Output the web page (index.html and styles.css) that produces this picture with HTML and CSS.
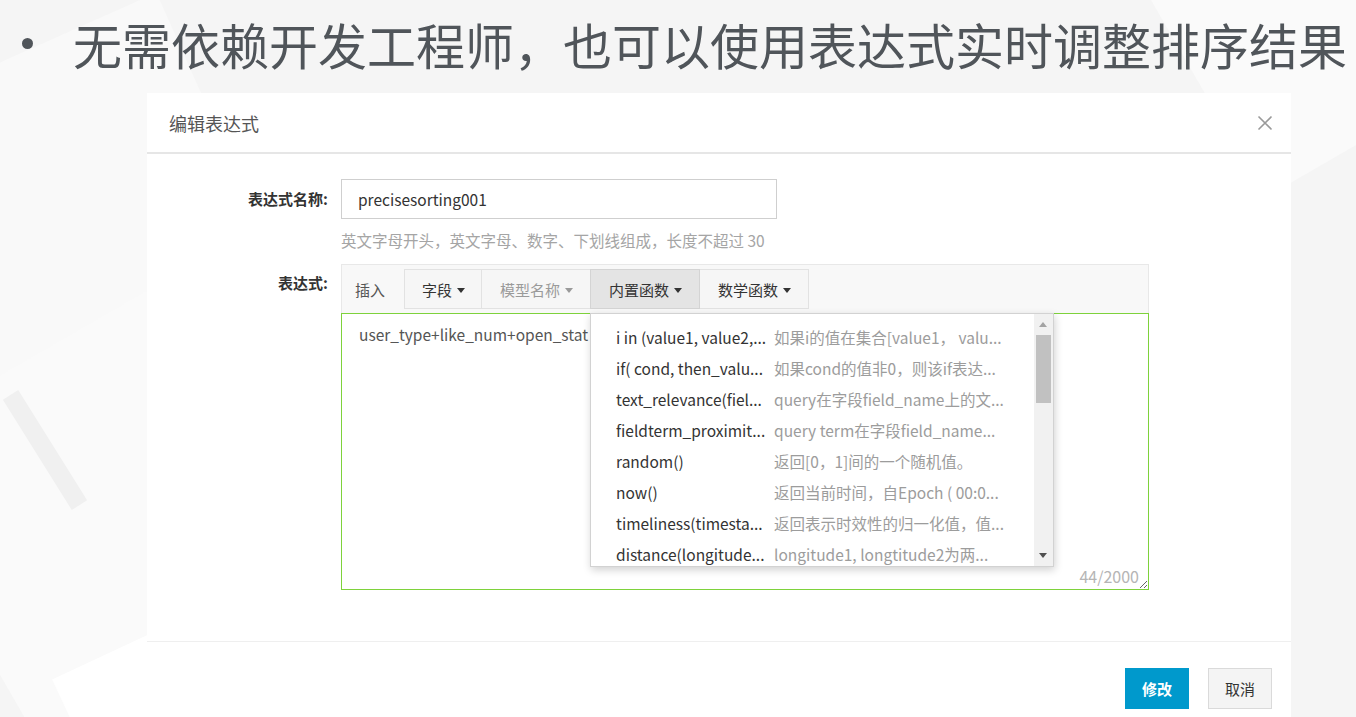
FILE: index.html
```html
<!DOCTYPE html>
<html lang="zh-CN">
<head>
    <meta charset="UTF-8">
    <meta name="viewport" content="width=device-width, initial-scale=1.0">
    <title>编辑表达式</title>
    <link rel="stylesheet" href="styles.css">
</head>
<body>
    <div class="bg-shapes">
        <span class="shape s1"></span>
        <span class="shape s2"></span>
        <span class="shape s3"></span>
        <span class="shape s4"></span>
        <span class="shape s5"></span>
    </div>

    <div class="slide">
        <h1 class="headline"><span class="dot"></span>无需依赖开发工程师，也可以使用表达式实时调整排序结果</h1>

        <div class="dialog">
            <div class="dialog-header">
                <span class="dialog-title">编辑表达式</span>
                <svg class="close" width="16" height="16" viewBox="0 0 16 16">
                    <path d="M1.5 1.5 L14.5 14.5 M14.5 1.5 L1.5 14.5" stroke="#9a9a9a" stroke-width="1.6" fill="none"/>
                </svg>
            </div>

            <div class="dialog-body">
                <div class="form-row">
                    <label class="form-label label-input">表达式名称:</label>
                    <div class="form-field">
                        <div class="text-input">precisesorting001</div>
                        <div class="hint">英文字母开头，英文字母、数字、下划线组成，长度不超过 30</div>
                    </div>
                </div>

                <div class="form-row">
                    <label class="form-label label-editor">表达式:</label>
                    <div class="form-field">
                        <div class="toolbar">
                            <span class="toolbar-label">插入</span>
                            <div class="btn-group">
                                <span class="tool-btn">字段<i class="caret"></i></span>
                                <span class="tool-btn disabled">模型名称<i class="caret"></i></span>
                                <span class="tool-btn active">内置函数<i class="caret"></i>
                                    <div class="fn-menu">
                                        <ul class="fn-list">
                                            <li><span class="fn-name">i in (value1, value2,...</span><span class="fn-desc">如果i的值在集合[value1，  valu...</span></li>
                                            <li><span class="fn-name">if( cond, then_valu...</span><span class="fn-desc">如果cond的值非0，则该if表达...</span></li>
                                            <li><span class="fn-name">text_relevance(fiel...</span><span class="fn-desc">query在字段field_name上的文...</span></li>
                                            <li><span class="fn-name">fieldterm_proximit...</span><span class="fn-desc">query term在字段field_name...</span></li>
                                            <li><span class="fn-name">random()</span><span class="fn-desc">返回[0，1]间的一个随机值。</span></li>
                                            <li><span class="fn-name">now()</span><span class="fn-desc">返回当前时间，自Epoch ( 00:0...</span></li>
                                            <li><span class="fn-name">timeliness(timesta...</span><span class="fn-desc">返回表示时效性的归一化值，值...</span></li>
                                            <li><span class="fn-name">distance(longitude...</span><span class="fn-desc">longitude1, longtitude2为两...</span></li>
                                        </ul>
                                        <div class="scrollbar">
                                            <i class="arrow up"></i>
                                            <span class="thumb"></span>
                                            <i class="arrow down"></i>
                                        </div>
                                    </div>
                                </span>
                                <span class="tool-btn">数学函数<i class="caret"></i></span>
                            </div>
                        </div>
                        <div class="editor">
                            <div class="editor-text">user_type+like_num+open_stat</div>
                            <span class="counter">44/2000</span>
                            <svg class="grip" width="9" height="9" viewBox="0 0 9 9">
                                <path d="M8 1 L1 8 M8 5 L5 8" stroke="#666" stroke-width="1" fill="none"/>
                            </svg>
                        </div>
                    </div>
                </div>
            </div>

            <div class="dialog-footer">
                <button class="btn btn-primary">修改</button>
                <button class="btn">取消</button>
            </div>
        </div>
    </div>
</body>
</html>
```

FILE: styles.css
```css
/* page */
html, body {
    margin: 0;
    padding: 0;
}
body {
    width: 1356px;
    height: 717px;
    overflow: hidden;
    background-color: #f5f5f5;
    font-family: "Noto Sans CJK SC", "Noto Sans", sans-serif;
    color: #333;
    position: relative;
}

/* faint geometric background */
.bg-shapes {
    position: absolute;
    inset: 0;
    overflow: hidden;
}
.shape {
    position: absolute;
    display: block;
}
.s1 {
    left: -160px;
    top: 60px;
    width: 420px;
    height: 420px;
    background-color: #f9f9f9;
    transform: rotate(-24deg);
}
.s2 {
    left: -60px;
    top: 330px;
    width: 380px;
    height: 380px;
    background-color: #fafafa;
    transform: rotate(-30deg);
}
.s3 {
    left: 36px;
    top: 385px;
    width: 18px;
    height: 130px;
    background-color: #f0f0f0;
    transform: rotate(-32deg);
}
.s4 {
    left: 70px;
    top: 640px;
    width: 160px;
    height: 120px;
    background-color: #ffffff;
    transform: rotate(-25deg);
}
.s5 {
    left: 1180px;
    top: -120px;
    width: 300px;
    height: 260px;
    background-color: #fafafa;
    transform: rotate(-30deg);
}

.slide {
    position: relative;
}

/* headline */
.headline {
    margin: 0;
    height: 93px;
    padding: 0 0 7px 22px;
    box-sizing: border-box;
    display: flex;
    align-items: center;
    font-size: 49px;
    font-weight: 400;
    color: #50555a;
    white-space: nowrap;
}
.dot {
    width: 11px;
    height: 11px;
    border-radius: 50%;
    background-color: #50555a;
    margin-right: 40px;
    flex: none;
}

/* dialog */
.dialog {
    margin-left: 147px;
    width: 1144px;
    background-color: #fff;
}
.dialog-header {
    height: 59px;
    display: flex;
    align-items: center;
    justify-content: space-between;
    padding: 0 18px 0 22px;
    border-bottom: 2px solid #e6e6e6;
}
.dialog-title {
    font-size: 18px;
    color: #555;
}
.close {
    display: block;
}

.dialog-body {
    padding: 25px 0 51px;
}
.form-row {
    display: flex;
}
.form-row + .form-row {
    margin-top: 14px;
}
.form-label {
    width: 181px;
    margin-right: 13px;
    text-align: right;
    font-size: 15px;
    font-weight: bold;
    color: #333;
    flex: none;
}
.label-input {
    line-height: 40px;
}
.label-editor {
    padding-top: 9px;
    line-height: 20px;
}
.form-field {
    width: 808px;
}

.text-input {
    width: 436px;
    height: 40px;
    box-sizing: border-box;
    border: 1px solid #cfcfcf;
    padding: 0 16px;
    line-height: 38px;
    font-size: 15.5px;
    color: #333;
}
.hint {
    margin-top: 11px;
    line-height: 20px;
    font-size: 15.5px;
    color: #a5a5a5;
}

/* expression toolbar */
.toolbar {
    height: 49px;
    box-sizing: border-box;
    border: 1px solid #e8e8e8;
    border-bottom: none;
    background-color: #f8f8f8;
    display: flex;
    align-items: center;
    padding-left: 13px;
}
.toolbar-label {
    font-size: 15px;
    color: #555;
    margin-right: 20px;
}
.btn-group {
    display: flex;
}
.tool-btn {
    position: relative;
    height: 40px;
    box-sizing: border-box;
    padding: 0 17px 0 18px;
    border: 1px solid #e2e2e2;
    margin-left: -1px;
    background-color: #f6f6f6;
    display: flex;
    align-items: center;
    font-size: 15px;
    color: #333;
}
.tool-btn:first-child {
    padding: 0 16px 0 17px;
}
.tool-btn.disabled {
    color: #9a9a9a;
}
.tool-btn.disabled .caret {
    border-top-color: #9a9a9a;
}
.tool-btn.active {
    background-color: #e4e4e4;
    border-color: #d4d4d4;
    z-index: 2;
}
.caret {
    width: 0;
    height: 0;
    margin-left: 5px;
    margin-top: 2px;
    border-left: 4.5px solid transparent;
    border-right: 4.5px solid transparent;
    border-top: 5px solid #333;
}

/* function dropdown */
.fn-menu {
    position: absolute;
    left: -1px;
    top: 43px;
    width: 464px;
    height: 254px;
    box-sizing: border-box;
    background-color: #fff;
    border: 1px solid #d2d2d2;
    box-shadow: 1px 3px 8px rgba(0, 0, 0, 0.18);
    display: flex;
    z-index: 5;
}
.fn-list {
    list-style: none;
    margin: 0;
    padding: 7px 0 0 25px;
    flex: 1;
}
.fn-list li {
    height: 31px;
    display: flex;
    align-items: center;
    white-space: nowrap;
    font-size: 15.5px;
}
.fn-name {
    width: 158px;
    flex: none;
    color: #333;
}
.fn-desc {
    color: #9c9c9c;
}
.scrollbar {
    position: relative;
    width: 19px;
    flex: none;
    background-color: #f1f1f1;
}
.thumb {
    position: absolute;
    left: 2px;
    right: 2px;
    top: 21px;
    height: 68px;
    background-color: #c1c1c1;
}
.arrow {
    position: absolute;
    left: 5px;
    width: 0;
    height: 0;
    border-left: 4.5px solid transparent;
    border-right: 4.5px solid transparent;
}
.arrow.up {
    top: 8px;
    border-bottom: 5px solid #a3a3a3;
}
.arrow.down {
    bottom: 8px;
    border-top: 5px solid #505050;
}

/* editor */
.editor {
    position: relative;
    height: 277px;
    box-sizing: border-box;
    border: 1px solid #7ed23b;
    padding: 10px 17px;
}
.editor-text {
    white-space: nowrap;
    font-size: 15.5px;
    line-height: 21px;
    color: #555;
}
.counter {
    position: absolute;
    right: 9px;
    bottom: 1px;
    font-size: 16px;
    color: #b5b5b5;
}
.grip {
    position: absolute;
    right: 0;
    bottom: 0;
}

/* footer */
.dialog-footer {
    border-top: 1px solid #efefef;
    padding: 26px 19px 20px 0;
    display: flex;
    justify-content: flex-end;
    gap: 19px;
}
.btn {
    width: 64px;
    height: 41px;
    border: 1px solid #dadada;
    background-color: #f4f4f4;
    font-family: inherit;
    font-size: 15px;
    color: #333;
    padding: 0;
}
.btn-primary {
    background-color: #0099cc;
    border-color: #0099cc;
    color: #fff;
    font-weight: bold;
}
```
